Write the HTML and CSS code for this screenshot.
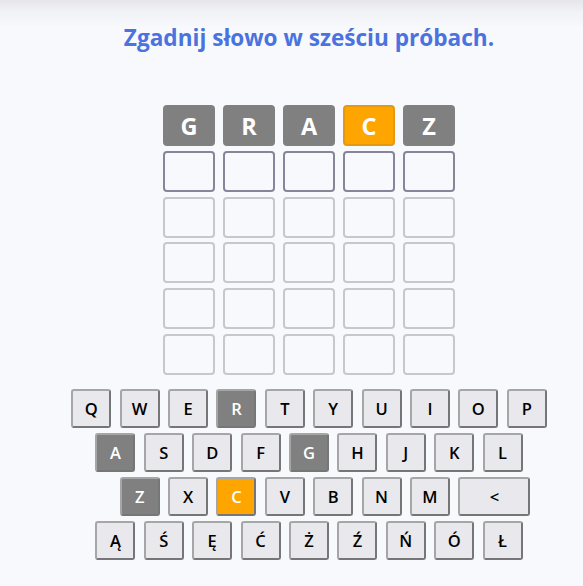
FILE: index.html
```html
<!DOCTYPE html>
<html lang="pl">
<head>
<meta charset="utf-8">
<title>Zgadnij słowo</title>
<link rel="stylesheet" href="styles.css">
</head>
<body>
<div class="app">
  <h1 class="title">Zgadnij słowo w sześciu próbach.</h1>
  <div class="board">
    <div class="tile filled">G</div>
    <div class="tile filled">R</div>
    <div class="tile filled">A</div>
    <div class="tile present">C</div>
    <div class="tile filled">Z</div>
    <div class="tile active"></div>
    <div class="tile active"></div>
    <div class="tile active"></div>
    <div class="tile active"></div>
    <div class="tile active"></div>
    <div class="tile"></div><div class="tile"></div><div class="tile"></div><div class="tile"></div><div class="tile"></div>
    <div class="tile"></div><div class="tile"></div><div class="tile"></div><div class="tile"></div><div class="tile"></div>
    <div class="tile"></div><div class="tile"></div><div class="tile"></div><div class="tile"></div><div class="tile"></div>
    <div class="tile"></div><div class="tile"></div><div class="tile"></div><div class="tile"></div><div class="tile"></div>
  </div>
  <div class="keyboard">
    <div class="krow">
      <button class="key">Q</button><button class="key">W</button><button class="key">E</button><button class="key used">R</button><button class="key">T</button><button class="key">Y</button><button class="key">U</button><button class="key">I</button><button class="key">O</button><button class="key">P</button>
    </div>
    <div class="krow">
      <button class="key used">A</button><button class="key">S</button><button class="key">D</button><button class="key">F</button><button class="key used">G</button><button class="key">H</button><button class="key">J</button><button class="key">K</button><button class="key">L</button>
    </div>
    <div class="krow shifted">
      <button class="key used">Z</button><button class="key">X</button><button class="key hit">C</button><button class="key">V</button><button class="key">B</button><button class="key">N</button><button class="key">M</button><button class="key wide">&lt;</button>
    </div>
    <div class="krow">
      <button class="key">Ą</button><button class="key">Ś</button><button class="key">Ę</button><button class="key">Ć</button><button class="key">Ż</button><button class="key">Ź</button><button class="key">Ń</button><button class="key">Ó</button><button class="key">Ł</button>
    </div>
  </div>
</div>
</body>
</html>
```

FILE: styles.css
```css
html, body {
  margin: 0;
  padding: 0;
}
body {
  width: 583px;
  height: 586px;
  overflow: hidden;
  background: linear-gradient(to bottom, #e6e6ea 0px, #f1f2f6 12px, #f8f9fc 28px, #f8f9fc 100%);
  font-family: "Open Sans", "Noto Sans", sans-serif;
}
.app {
  padding-left: 35px;
  display: flex;
  flex-direction: column;
  align-items: center;
}
.title {
  margin: 22px 0 0;
  font-size: 22.6px;
  line-height: 32px;
  font-weight: 700;
  color: #4a73df;
  letter-spacing: 0;
}
.board {
  margin-top: 51px;
  display: grid;
  grid-template-columns: repeat(5, 52px);
  grid-auto-rows: 41px;
  column-gap: 8px;
  row-gap: 4.8px;
}
.tile {
  box-sizing: border-box;
  border: 2px solid #c8c8cc;
  border-radius: 4px;
  display: flex;
  align-items: center;
  justify-content: center;
  font-size: 23.5px;
  font-weight: 700;
  color: #ffffff;
}
.tile.active {
  border-color: #87859a;
}
.tile.filled {
  background: #808080;
  border-color: #808080;
}
.tile.present {
  background: #ffa500;
  border-color: #e39a12;
}
.keyboard {
  margin-top: 14px;
  display: flex;
  flex-direction: column;
  gap: 5px;
}
.krow {
  display: flex;
  justify-content: center;
  gap: 8.4px;
}
.krow.shifted {
  padding-left: 32px;
}
.key {
  box-sizing: border-box;
  width: 40px;
  height: 39px;
  padding: 0;
  margin: 0;
  background: #e9e9ed;
  border: 2px solid;
  border-color: #a6a6a6 #767676 #767676 #a6a6a6;
  border-radius: 3px;
  font-family: "Open Sans", "Noto Sans", sans-serif;
  font-size: 16.5px;
  font-weight: 600;
  color: #000000;
  display: flex;
  align-items: center;
  justify-content: center;
}
.key.wide {
  width: 72px;
}
.key.used {
  background: #808080;
  color: #ffffff;
}
.key.hit {
  background: #ffa500;
  color: #ffffff;
}
```
